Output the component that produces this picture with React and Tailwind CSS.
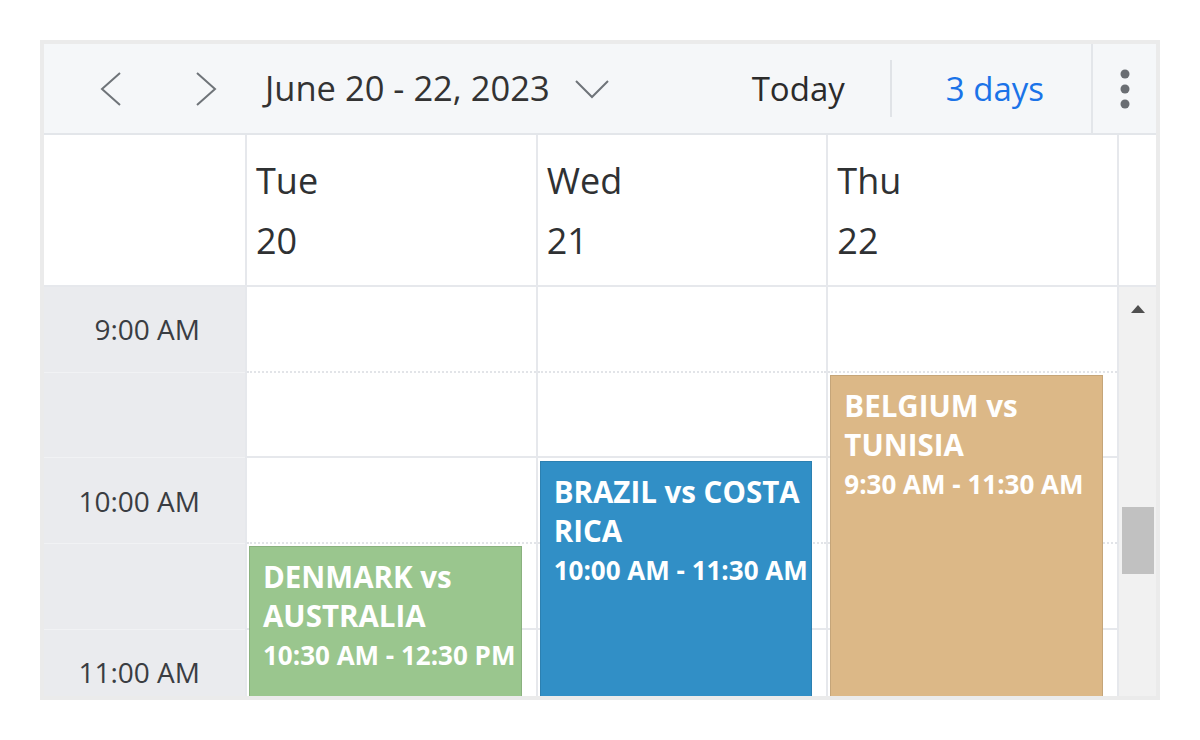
const FONT = { fontFamily: '"Open Sans", "Noto Sans", sans-serif' };

const HALF = 85.7; // height of one half-hour slot in px

const days = [
  { name: 'Tue', num: '20' },
  { name: 'Wed', num: '21' },
  { name: 'Thu', num: '22' },
];

const events = [
  { day: 0, start: 3, slots: 4, title: ['DENMARK vs', 'AUSTRALIA'], time: '10:30 AM - 12:30 PM', color: 'bg-[#9ac68e]', top: 2 },
  { day: 1, start: 2, slots: 3, title: ['BRAZIL vs COSTA', 'RICA'], time: '10:00 AM - 11:30 AM', color: 'bg-[#318fc6]', top: 3 },
  { day: 2, start: 1, slots: 4, title: ['BELGIUM vs', 'TUNISIA'], time: '9:30 AM - 11:30 AM', color: 'bg-[#dcb887]', top: 2 },
];

const slotCount = 6;

function ChevronLeft() {
  return (
    <svg width="26" height="36" viewBox="0 0 26 36" fill="none">
      <polyline points="22,2 4,18 22,34" stroke="#6f7479" strokeWidth="2" strokeLinejoin="miter" />
    </svg>
  );
}

function ChevronRight() {
  return (
    <svg width="26" height="36" viewBox="0 0 26 36" fill="none">
      <polyline points="4,2 22,18 4,34" stroke="#6f7479" strokeWidth="2" />
    </svg>
  );
}

function ChevronDown() {
  return (
    <svg width="36" height="20" viewBox="0 0 36 20" fill="none">
      <polyline points="2,2 18,18 34,2" stroke="#6f7479" strokeWidth="2" />
    </svg>
  );
}

function Dots() {
  return (
    <svg width="12" height="42" viewBox="0 0 12 42">
      <circle cx="6" cy="6" r="4.5" fill="#6a6e73" />
      <circle cx="6" cy="21" r="4.5" fill="#6a6e73" />
      <circle cx="6" cy="36" r="4.5" fill="#6a6e73" />
    </svg>
  );
}

function Toolbar() {
  return (
    <div className="h-[91px] shrink-0 bg-[#f5f7f9] border-b-2 border-[#e3e6ea] flex items-center text-[#333]">
      <button className="ml-[43px] w-[48px] h-[48px] flex items-center justify-center">
        <ChevronLeft />
      </button>
      <button className="ml-[47px] w-[48px] h-[48px] flex items-center justify-center">
        <ChevronRight />
      </button>
      <span className="ml-[35px] text-[34.5px] leading-none text-[#333] whitespace-nowrap">June 20 - 22, 2023</span>
      <span className="ml-[24px] flex items-center">
        <ChevronDown />
      </span>
      <div className="flex-1" />
      <span className="text-[33px] leading-none text-[#2b2b2b]">Today</span>
      <div className="ml-[45px] w-[2px] h-[57px] bg-[#e0e3e7]" />
      <span className="ml-[54px] text-[33px] leading-none text-[#1a73e8]">3 days</span>
      <div className="ml-[47px] h-full w-[65px] border-l-2 border-[#e3e6ea] flex items-center justify-center">
        <Dots />
      </div>
    </div>
  );
}

function Header() {
  return (
    <div className="h-[152px] shrink-0 flex border-b-2 border-[#e6e8ec] bg-white">
      <div className="w-[203px] shrink-0 border-r-2 border-[#e6e8ec]" />
      {days.map((d) => (
        <div key={d.name} className="flex-1 border-r-2 border-[#e6e8ec] pt-[16px] pl-[9px] text-[36px] leading-[60px] text-[#2f3133]">
          <div>{d.name}</div>
          <div>{d.num}</div>
        </div>
      ))}
      <div className="w-[37px] shrink-0" />
    </div>
  );
}

function TimeColumn() {
  const labels = ['9:00 AM', '', '10:00 AM', '', '11:00 AM', ''];
  return (
    <div className="w-[203px] shrink-0 bg-[#eaebee] border-r-2 border-[#e6e8ec]">
      {labels.map((l, i) => (
        <div
          key={i}
          className="h-[85.7px] border-b border-[#f1f2f4] flex items-center justify-end pr-[45px] text-[28px] text-[#3a3d42]"
        >
          {l}
        </div>
      ))}
    </div>
  );
}

function DayColumn({ index }) {
  return (
    <div className="flex-1 relative border-r-2 border-[#e6e8ec]">
      {Array.from({ length: slotCount }).map((_, i) => (
        <div
          key={i}
          className={
            i % 2 === 0
              ? 'h-[85.7px] border-b-2 border-dotted border-[#e2e4e8]'
              : 'h-[85.7px] border-b-2 border-[#e6e8ec]'
          }
        />
      ))}
      {events
        .filter((e) => e.day === index)
        .map((e) => (
          <div
            key={e.time}
            className={`absolute left-[2px] right-[14px] ${e.color} border border-black/10 text-white font-bold pl-[13px] pt-[10px]`}
            style={{ top: e.start * HALF + e.top, height: e.slots * HALF - 4 }}
          >
            {e.title.map((t) => (
              <div key={t} className="text-[29.5px] leading-[39px] whitespace-nowrap">{t}</div>
            ))}
            <div className="text-[26px] leading-[40px] whitespace-nowrap">{e.time}</div>
          </div>
        ))}
    </div>
  );
}

function Scrollbar() {
  return (
    <div className="w-[37px] shrink-0 bg-[#f1f1f1] flex flex-col items-center">
      <svg className="mt-[17px]" width="16" height="10" viewBox="0 0 16 10">
        <polygon points="8,1 15,9 1,9" fill="#505050" />
      </svg>
      <div className="mt-[193px] w-[32px] h-[67px] bg-[#c1c1c1]" />
    </div>
  );
}

export default function App() {
  return (
    <div className="w-[1200px] h-[740px] bg-white pt-[40px] pl-[40px]" style={FONT}>
      <div className="w-[1120px] h-[660px] border-4 border-[#ebebeb] flex flex-col overflow-hidden bg-white">
        <Toolbar />
        <Header />
        <div className="flex-1 flex overflow-hidden">
          <TimeColumn />
          {days.map((d, i) => (
            <DayColumn key={d.name} index={i} />
          ))}
          <Scrollbar />
        </div>
      </div>
    </div>
  );
}
